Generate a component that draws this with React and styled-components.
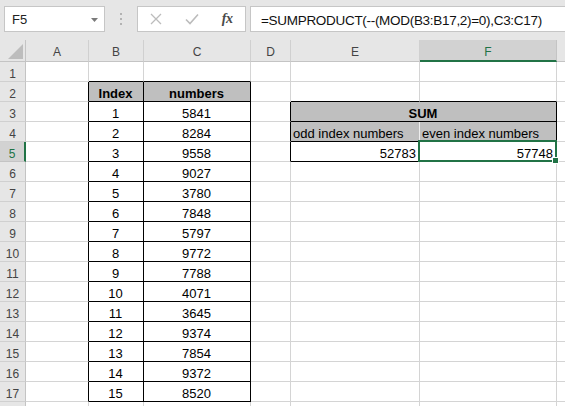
import styled, { createGlobalStyle } from "styled-components";

const GRID = "#d4d4d4";
const HEAD_LINE = "#c4c4c4";
const GREEN = "#217346";

const GlobalStyle = createGlobalStyle`
  html, body {
    margin: 0;
    padding: 0;
    overflow: hidden;
    background: #ffffff;
    font-family: "Liberation Sans", Arial, sans-serif;
  }
`;

const data = [
  [1, 5841],
  [2, 8284],
  [3, 9558],
  [4, 9027],
  [5, 3780],
  [6, 7848],
  [7, 5797],
  [8, 9772],
  [9, 7788],
  [10, 4071],
  [11, 3645],
  [12, 9374],
  [13, 7854],
  [14, 9372],
  [15, 8520],
];

const oddSum = data.filter(([i]) => i % 2 === 1).reduce((s, [, n]) => s + n, 0);
const evenSum = data.filter(([i]) => i % 2 === 0).reduce((s, [, n]) => s + n, 0);

// G is only a sliver at the right edge, its letter is out of view
const COLS = ["A", "B", "C", "D", "E", "F", "G"];
const VISIBLE_LETTERS = ["A", "B", "C", "D", "E", "F"];
const ROWS = Array.from({ length: 18 }, (_, i) => i + 1);

const edgeColor = (kind) =>
  kind === "black" ? "#000000" : kind === "light" ? "#eeeeee" : GRID;

const Page = styled.div`
  width: 565px;
  height: 406px;
  overflow: hidden;
  background: #e6e6e6;
`;

const Toolbar = styled.div`
  display: flex;
  align-items: flex-start;
  box-sizing: border-box;
  height: 40px;
  padding: 6px 0 0 4px;
  background: #e6e6e6;
`;

const NameBox = styled.div`
  display: flex;
  align-items: center;
  justify-content: space-between;
  box-sizing: border-box;
  width: 101px;
  height: 26px;
  padding: 1px 6px 0 7px;
  background: #ffffff;
  border: 1px solid #c6c6c6;
  font-size: 13px;
  color: #222;
`;

const Grip = styled.div`
  display: flex;
  flex-direction: column;
  align-items: center;
  justify-content: center;
  gap: 3px;
  width: 32px;
  height: 26px;

  & span {
    width: 2px;
    height: 2px;
    background: #b3b3b3;
  }
`;

const FxBox = styled.div`
  display: flex;
  box-sizing: border-box;
  width: 109px;
  height: 26px;
  background: #ffffff;
  border: 1px solid #c6c6c6;
`;

const FxSlot = styled.div`
  flex: 1;
  display: flex;
  align-items: center;
  justify-content: center;
`;

const FxLabel = styled.span`
  font-family: "Liberation Serif", "Times New Roman", serif;
  font-style: italic;
  font-weight: 700;
  font-size: 14px;
  color: #4a4a4a;
  letter-spacing: -0.5px;
`;

const FormulaInput = styled.div`
  flex: 1;
  display: flex;
  align-items: center;
  box-sizing: border-box;
  height: 26px;
  margin-left: 4px;
  padding: 2px 0 0 10px;
  background: #ffffff;
  border: 1px solid #c6c6c6;
  border-right: none;
  font-size: 13.5px;
  letter-spacing: -0.3px;
  color: #111;
  white-space: nowrap;
  overflow: hidden;
`;

const Sheet = styled.div`
  display: grid;
  grid-template-columns: 26px 63px 55px 107px 40px 129px 137px 64px;
  grid-template-rows: 22px repeat(18, 20px);
  width: max-content;
  background: #ffffff;
`;

const Corner = styled.div`
  display: flex;
  align-items: flex-end;
  justify-content: flex-end;
  box-sizing: border-box;
  padding: 0 2px 2px 0;
  background: #e6e6e6;
  border-right: 1px solid ${HEAD_LINE};
  border-bottom: 1px solid ${HEAD_LINE};
`;

const ColHead = styled.div`
  box-sizing: border-box;
  padding-top: 6px;
  line-height: 13px;
  font-size: 12px;
  text-align: center;
  color: ${(p) => (p.$active ? GREEN : "#444444")};
  background: ${(p) => (p.$active ? "#d2d2d2" : "#e6e6e6")};
  border-right: 1px solid ${(p) => (p.$active ? HEAD_LINE : "#d0d0d0")};
  border-bottom: ${(p) =>
    p.$active ? `2px solid ${GREEN}` : `1px solid ${HEAD_LINE}`};
`;

const RowHead = styled.div`
  box-sizing: border-box;
  padding-top: 5px;
  line-height: 14px;
  font-size: 12px;
  text-align: center;
  overflow: hidden;
  color: ${(p) => (p.$active ? GREEN : "#444444")};
  background: ${(p) => (p.$active ? "#d2d2d2" : "#e6e6e6")};
  border-right: ${(p) =>
    p.$active ? `2px solid ${GREEN}` : `1px solid ${HEAD_LINE}`};
  border-bottom: 1px solid ${(p) => (p.$active ? HEAD_LINE : "#d0d0d0")};
`;

const Cell = styled.div`
  position: relative;
  box-sizing: border-box;
  grid-column: ${(p) => (p.$span ? `span ${p.$span}` : "auto")};
  padding: 5px 3px 0 2px;
  line-height: 14px;
  font-size: 13px;
  color: #000000;
  white-space: nowrap;
  overflow: ${(p) => (p.$selected ? "visible" : "hidden")};
  z-index: ${(p) => (p.$selected ? 2 : "auto")};
  text-align: ${(p) => p.$align || "left"};
  font-weight: ${(p) => (p.$bold ? 700 : 400)};
  background: ${(p) => (p.$fill ? "#bfbfbf" : "#ffffff")};
  border-right: 1px solid ${(p) => edgeColor(p.$r)};
  border-bottom: 1px solid ${(p) => edgeColor(p.$b)};
`;

const Selection = styled.div`
  position: absolute;
  top: -2px;
  left: -2px;
  right: -1px;
  bottom: -1px;
  border: 2px solid ${GREEN};
  pointer-events: none;
`;

const Handle = styled.div`
  position: absolute;
  right: -4px;
  bottom: -4px;
  width: 5px;
  height: 5px;
  background: ${GREEN};
  border: 1px solid #ffffff;
`;

function describe(r, col) {
  const p = { r: "grid", b: "grid" };
  const inIndex = r >= 2 && r <= 17;
  const inSum = r >= 3 && r <= 5;

  // index / numbers table
  if (col === "A" && inIndex) p.r = "black";
  if ((col === "B" || col === "C") && r === 1) p.b = "black";
  if ((col === "B" || col === "C") && inIndex) {
    p.r = "black";
    p.b = "black";
    p.align = "center";
    if (r === 2) {
      p.fill = true;
      p.bold = true;
      p.text = col === "B" ? "Index" : "numbers";
    } else {
      p.text = data[r - 3][col === "B" ? 0 : 1];
    }
  }

  // SUM table
  if ((col === "E" || col === "F") && r === 2) p.b = "black";
  if (col === "D" && inSum) p.r = "black";
  if ((col === "E" || col === "F") && inSum) {
    p.b = "black";
    p.r = col === "E" && r === 4 ? "light" : "black";
  }
  if (r === 3 && col === "E") {
    p.span = 2;
    p.fill = true;
    p.bold = true;
    p.align = "center";
    p.text = "SUM";
  }
  if (r === 3 && col === "F") p.skip = true;
  if (r === 4 && (col === "E" || col === "F")) {
    p.fill = true;
    p.text = col === "E" ? "odd index numbers" : "even index numbers";
  }
  if (r === 5 && (col === "E" || col === "F")) {
    p.align = "right";
    p.text = col === "E" ? oddSum : evenSum;
    p.selected = col === "F";
  }
  return p;
}

function CornerMark() {
  return (
    <svg width="15" height="15" viewBox="0 0 15 15">
      <polygon points="15,0 15,15 0,15" fill="#bdbdbd" />
    </svg>
  );
}

function App() {
  return (
    <Page>
      <GlobalStyle />
      <Toolbar>
        <NameBox>
          <span>F5</span>
          <svg width="7" height="4" viewBox="0 0 7 4">
            <polygon points="0,0 7,0 3.5,4" fill="#7a7a7a" />
          </svg>
        </NameBox>
        <Grip>
          <span />
          <span />
          <span />
        </Grip>
        <FxBox>
          <FxSlot>
            <svg width="12" height="12" viewBox="0 0 12 12">
              <path d="M1 1 L11 11 M11 1 L1 11" stroke="#bcbcbc" strokeWidth="1.3" />
            </svg>
          </FxSlot>
          <FxSlot>
            <svg width="14" height="12" viewBox="0 0 14 12">
              <path d="M1 6.5 L5 10.5 L13 1.5" stroke="#bcbcbc" strokeWidth="1.6" fill="none" />
            </svg>
          </FxSlot>
          <FxSlot>
            <FxLabel>fx</FxLabel>
          </FxSlot>
        </FxBox>
        <FormulaInput>=SUMPRODUCT(--(MOD(B3:B17,2)=0),C3:C17)</FormulaInput>
      </Toolbar>

      <Sheet>
        <Corner>
          <CornerMark />
        </Corner>
        {COLS.map((c) => (
          <ColHead key={c} $active={c === "F"}>
            {VISIBLE_LETTERS.includes(c) ? c : ""}
          </ColHead>
        ))}
        {ROWS.map((r) => (
          <Row key={r} r={r} />
        ))}
      </Sheet>
    </Page>
  );
}

function Row({ r }) {
  return (
    <>
      <RowHead $active={r === 5}>{r <= 17 ? r : ""}</RowHead>
      {COLS.map((col) => {
        const p = describe(r, col);
        if (p.skip) return null;
        return (
          <Cell
            key={col}
            $r={p.r}
            $b={p.b}
            $span={p.span}
            $fill={p.fill}
            $bold={p.bold}
            $align={p.align}
            $selected={p.selected}
          >
            {p.text}
            {p.selected && (
              <Selection>
                <Handle />
              </Selection>
            )}
          </Cell>
        );
      })}
    </>
  );
}

export default App;
